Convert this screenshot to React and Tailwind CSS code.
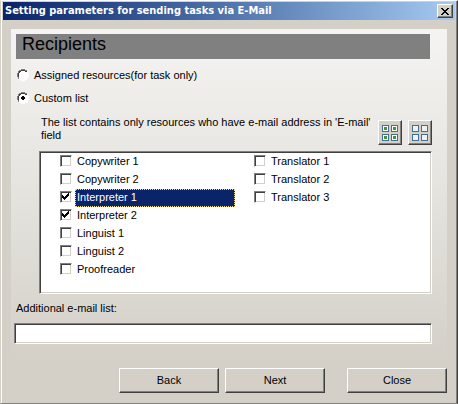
import React, { useState } from 'react';
import clsx from 'clsx';

const RAISED = 'border border-t-white border-l-white border-r-[#404040] border-b-[#404040] shadow-[inset_-1px_-1px_0_#808080] bg-[#d4d0c8]';
const SUNKEN = 'border border-t-[#808080] border-l-[#808080] border-r-white border-b-white shadow-[inset_1px_1px_0_#404040,inset_-1px_-1px_0_#d4d0c8] bg-white';

const COLUMNS = [
  ['Copywriter 1', 'Copywriter 2', 'Interpreter 1', 'Interpreter 2', 'Linguist 1', 'Linguist 2', 'Proofreader'],
  ['Translator 1', 'Translator 2', 'Translator 3'],
];
const ALL = COLUMNS.flat();

function TitleBar({ title }) {
  return (
    <header className="flex h-[18px] items-center justify-between bg-linear-to-r from-[#0a246a] to-[#a6caf0] pr-0.5 pl-0.5">
      <h1 className="font-['DejaVu_Sans_Condensed','DejaVu_Sans',sans-serif] text-[11px] leading-[18px] font-bold whitespace-nowrap text-white">{title}</h1>
      <button type="button" aria-label="Close window" className={clsx(RAISED, 'flex h-3.5 w-4 items-center justify-center')}>
        <svg width="8" height="7" viewBox="0 0 8 7" shapeRendering="crispEdges">
          <path d="M0 0h2v1h1v1h2v-1h1v-1h2v1h-1v1h-1v1h-1v1h1v1h1v1h1v1h-2v-1h-1v-1h-2v1h-1v1h-2v-1h1v-1h1v-1h1v-1h-1v-1h-1v-1h-1z" fill="#000" />
        </svg>
      </button>
    </header>
  );
}

function Radio({ label, checked, onChange }) {
  return (
    <label className="flex h-[22px] items-center gap-[5px] leading-3">
      <span className="relative size-3">
        <input type="radio" name="mode" checked={checked} onChange={onChange} className="block size-3 appearance-none" />
        <svg className="pointer-events-none absolute inset-0" width="12" height="12" viewBox="0 0 12 12" shapeRendering="crispEdges">
          <path d="M4 1h4v1h2v2h1v4h-1v2h-2v1h-4v-1h-2v-2h-1v-4h1v-2h2z" fill="#fff" />
          <path d="M4 0h4v1h2v1h-2v-1h-4v1h-2v2h-1v4h1v2h-1v-2h-1v-4h1v-2h1v-1h2z" fill="#808080" />
          <path d="M4 1h4v1h2v1h-2v-1h-4v1h-1v1h-1v4h-1v-4h1v-2h2z" fill="#404040" />
          <path d="M10 2h1v2h1v4h-1v2h-1v1h-2v1h-4v-1h-2v-1h2v1h4v-1h2v-2h1v-4h-1z" fill="#fff" />
          {checked && <path d="M5 4h2v1h1v2h-1v1h-2v-1h-1v-2h1z" fill="#000" />}
        </svg>
      </span>
      <span>{label}</span>
    </label>
  );
}

function Resource({ name, checked, selected, onChange }) {
  return (
    <label className="flex h-[18px] gap-[3px]">
      <span className="relative mt-0.5 size-3 shrink-0">
        <input type="checkbox" checked={checked} onChange={onChange} className={clsx(SUNKEN, 'block size-3 appearance-none')} />
        {checked && (
          <svg className="pointer-events-none absolute inset-0" width="12" height="12" viewBox="0 0 12 12" shapeRendering="crispEdges">
            <path d="M9 2v3h-1v1h-1v1h-1v1h-1v1h-1v-1h-1v-1h-1v-3h1v1h1v1h1v-1h1v-1h1v-1h1v-1z" fill="#000" />
          </svg>
        )}
      </span>
      <span className={clsx('h-[18px] border px-px leading-[15px]', selected ? 'w-40 border-dotted border-[#f5db95] bg-[#0a246a] text-white' : 'border-transparent')}>
        {name}
      </span>
    </label>
  );
}

function BoxesIcon({ filled }) {
  return (
    <svg width="16" height="16" viewBox="0 0 16 16" shapeRendering="crispEdges">
      {[[0, 0], [9, 0], [0, 9], [9, 9]].map(([x, y]) => (
        <g key={`${x}-${y}`}>
          <rect x={x} y={y} width="7" height="7" fill="#426f98" />
          <rect x={x + 1} y={y + 1} width="5" height="5" fill={filled ? '#fff' : '#f0f0f0'} />
          {filled && <rect x={x + 2} y={y + 2} width="3" height="3" fill="#459434" />}
        </g>
      ))}
    </svg>
  );
}

function IconButton({ label, filled, onClick }) {
  return (
    <button type="button" aria-label={label} onClick={onClick} className={clsx(RAISED, 'mt-1 flex h-[25px] w-6 shrink-0 items-center justify-center')}>
      <BoxesIcon filled={filled} />
    </button>
  );
}

function PushButton({ children }) {
  return <button type="button" className={clsx(RAISED, 'h-[25px] w-[100px]')}>{children}</button>;
}

export default function App() {
  const [mode, setMode] = useState('custom');
  const [checked, setChecked] = useState(['Interpreter 1', 'Interpreter 2']);
  const [current, setCurrent] = useState('Interpreter 1');
  const [emails, setEmails] = useState('');

  const toggle = (name) => {
    setCurrent(name);
    setChecked(checked.includes(name) ? checked.filter(n => n !== name) : [...checked, name]);
  };

  return (
    <div className="flex min-h-screen flex-col border-t border-r border-b border-l border-t-white border-r-[#404040] border-b-[#808080] border-l-[#d4d0c8] bg-[#d4d0c8] font-['Liberation_Sans',Arial,sans-serif] text-[11px] leading-[13px] text-black">
      <div className="flex grow flex-col border-r border-l border-r-[#808080] border-l-white px-px pt-px">
        <TitleBar title="Setting parameters for sending tasks via E-Mail" />

        <main className="mx-2 mt-[9px] bg-linear-to-b from-[#f5f4f2] via-[#e4e3de] to-[#d4d0c8] pt-[5px] pr-[15px] pb-4 pl-[3px]">
          <h2 className="mr-0.5 ml-0.5 h-[25px] bg-[#808080] pl-1.5 text-[18px] leading-5">Recipients</h2>

          <div className="mt-[5px] flex flex-col gap-px pl-[3px]">
            <Radio label="Assigned resources(for task only)" checked={mode === 'assigned'} onChange={() => setMode('assigned')} />
            <Radio label="Custom list" checked={mode === 'custom'} onChange={() => setMode('custom')} />
          </div>

          <div className="mt-[7px] flex items-start gap-1.5 pl-[27px]">
            <p className="grow">The list contains only resources who have e-mail address in 'E-mail' field</p>
            <IconButton label="Select all" filled onClick={() => setChecked(ALL)} />
            <IconButton label="Clear all" onClick={() => setChecked([])} />
          </div>

          <div className={clsx(SUNKEN, 'mt-1.5 ml-[25px] grid h-[143px] grid-cols-[194px_1fr] p-px pl-5')}>
            {COLUMNS.map((names, i) => (
              <div key={i}>
                {names.map(name => (
                  <Resource key={name} name={name} checked={checked.includes(name)} selected={name === current} onChange={() => toggle(name)} />
                ))}
              </div>
            ))}
          </div>

          <label htmlFor="emails" className="mt-2 block pl-0.5">Additional e-mail list:</label>
          <input id="emails" value={emails} onChange={e => setEmails(e.target.value)} className={clsx(SUNKEN, 'mt-2 block h-[21px] w-full px-1 outline-none')} />
        </main>

        <footer className="mt-2 mr-2 mb-2 flex justify-end gap-1.5">
          <PushButton>Back</PushButton>
          <PushButton>Next</PushButton>
          <div className="ml-4">
            <PushButton>Close</PushButton>
          </div>
        </footer>
      </div>
    </div>
  );
}
